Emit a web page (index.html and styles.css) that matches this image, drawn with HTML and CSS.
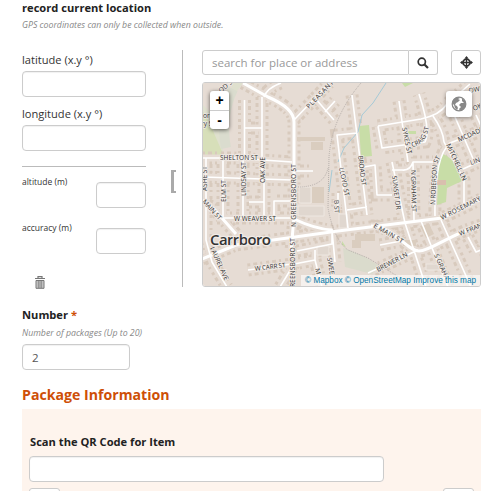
FILE: index.html
```html
<!DOCTYPE html>
<html lang="en">
<head>
<meta charset="utf-8">
<title>Package form</title>
<link rel="stylesheet" href="styles.css">
</head>
<body>
<form class="form">
  <section class="question">
    <h2 class="label">record current location</h2>
    <p class="hint">GPS coordinates can only be collected when outside.</p>
    <div class="geo">
      <div class="coords">
        <label class="coord">latitude (x.y °)<input class="field" type="text"></label>
        <label class="coord">longitude (x.y °)<input class="field" type="text"></label>
        <div class="extras">
          <label class="extra">altitude (m)<input class="field small" type="text"></label>
          <label class="extra">accuracy (m)<input class="field small" type="text"></label>
        </div>
        <svg class="trash" width="10" height="13" viewBox="0 0 10 13"><path d="M3 2V.7h4V2M0 2.5h10" fill="none" stroke="#777" stroke-width="1.2"/><path d="M1 4.5h8v7.8H1z" fill="#ccc" stroke="#777"/><path d="M3.3 5v7M5 5v7M6.7 5v7" stroke="#777" stroke-width=".8"/></svg>
      </div>
      <div class="bracket"></div>
      <div class="mapside">
        <div class="searchrow">
          <input class="search" type="text" placeholder="search for place or address">
          <button class="btn go" type="button"><svg width="12" height="12" viewBox="0 0 12 12" fill="none" stroke="#333"><circle cx="4.8" cy="4.8" r="3.6" stroke-width="1.7"/><path d="M7.5 7.5l3.5 3.5" stroke-width="2.2"/></svg></button>
          <button class="btn locate" type="button"><svg width="13" height="13" viewBox="0 0 13 13"><circle cx="6.5" cy="6.5" r="3.4" fill="none" stroke="#333" stroke-width="1.7"/><path d="M6.500 1v11M1 6.500h11" stroke="#333" stroke-width="1.3"/><path d="M6.500 0l2 2.600h-4zM6.500 13l2-2.600h-4zM0 6.500l2.600-2v4zM13 6.500l-2.600-2v4z" fill="#333"/></svg></button>
        </div>
        <div class="map">
          <svg class="tiles" viewBox="202 83 279 204">
            <defs>
              <g id="minor">
                <path d="M244.500 100V160M262 97V183M245 128h17M202 158h32L292 162M202 177L292 180M206 158V240L212 262L227 287M223 158V218M243 158V218M264 183V217M249 202h15M274 217V201h18M264 97Q267 88 281 83M294 120L315 98L334 120M325 112l10-11M315 98L329 83M217 218h77M297 251L332 244V229M280 287L294 264L315 260V250M315 260L322 287M332 230L335 262M248 270L292 264M338 193V204L336 212M294 171h19"/>
                <path d="M352 95L367 215M357 133L337 135L348 228M347 210L367 207M378 126L421 119Q440 115 447 104L470 84M378 126L382 148L425 142Q431 130 419 94M399 101L408 162M358 168L375 165L377 195H392M392 162L405 223M392 170H402Q410 171 413 162H433M413 162L414 220M433 116Q443 130 444 142L464 180V205M481 131L450 143Q434 157 435 216M452 110L474 161M463 169L481 161M476 115L481 126M405 223L426 287M421 221L448 287M441 220L471 287M468 237L476 252L481 250M380 245L401 241M368 273L418 250"/>
              </g>
              <g id="major">
                <path d="M243 83L268 97Q294 108 294 122V217L291 251M202 200L214 209L236 234M202 259L236 245L295 237L338 231L442 218L481 199M294 219Q315 229 332 230M371 226C392 225 407 251 419 251C431 251 448 235 481 225"/>
              </g>
              <path id="craig" d="M412 147Q425 145 429 128"/>
            </defs>
            <path d="M202 83h279v204H202z" fill="#e6dcd4"/>
            <path d="M202 83h41L223 110V158H202z" fill="#dfe0ce"/>
            <path d="M202 110L210 124L224 156H202z" fill="#d7dfb9"/>
            <path d="M202 83h31L224 109L216 118L202 104z" fill="#e6dcd4"/>
            <path d="M233 89Q220 116 226 148" fill="none" stroke="#dadcce" stroke-width="10"/>
            <use href="#minor" class="houses"/><use href="#major" class="houses"/>
            <use href="#minor" class="verge"/><use href="#major" class="verge"/>
            <path class="plot" d="M297 137h28v4h-28zM311 142h12v8h-12zM312 187h12v16h-12zM355 234h20v7h-20zM297 193h13v8h-13zM403 240h13v6h-13zM352 240h9v8h-9zM420 226l9-2 5 10-8 4z"/>
            <path class="lot" d="M299 187h12v16h-12zM298 206h26v10h-26zM339 214h8v14h-8zM317 246h12v9h-12zM426 264h14v6h-14z"/>
            <path class="park" d="M359 126l10-1 3 31-11 1zM402 83h11l-8 4zM443 154q14 6 19 27l-15 7-1 14-9 3 2-45zM408 131h8v3h-8zM342 245v-4l4 6z"/>
            <path d="M437 180h9v5h-9z" fill="#d9bfae"/>
            <path d="M343 248Q365 255 379 266L372 274L345 267z" fill="#dadbcc"/>
            <path class="stream" d="M386 83L373 103L362 115L358 132L344 148L338 162M332 170L329 192"/>
            <path class="rail" d="M361 83Q332 117 329 157L328 208Q334 240 348 250L368 258L402 279M298 187Q324 187 328 168"/>
            <use href="#minor" class="road minor"/><use href="#major" class="road major"/>
            <g class="names">
              <text transform="translate(309 109) rotate(-46)" textLength="36">PLEASANT</text>
              <text transform="translate(221 93) rotate(-40)">OD ST</text>
              <text x="199" y="118">oor</text><text x="201" y="126">ry S</text>
              <text x="220" y="160" textLength="38">SHELTON ST</text>
              <text transform="translate(202 202) rotate(48)" textLength="25">MAIN ST</text>
              <text transform="translate(207 191) rotate(-90)" textLength="25">ASHE ST</text>
              <text transform="translate(226 202) rotate(-90)" textLength="22">ELM ST</text>
              <text transform="translate(246 196) rotate(-90)" textLength="34">LINDSAY ST</text>
              <text transform="translate(265 183) rotate(-90)" textLength="26">OAK AVE</text>
              <text transform="translate(296 227) rotate(-90)" textLength="63">N GREENSBORO ST</text>
              <text transform="translate(295 292) rotate(-90)" textLength="54">GREENSBORO ST</text>
              <text x="234" y="221" textLength="42">W WEAVER ST</text>
              <text transform="translate(210 248) rotate(66)" textLength="36">LAUREL AVE</text>
              <text transform="translate(255 271) rotate(-7)" textLength="31">W CARR ST</text>
              <text transform="translate(327 258) rotate(80)">SWEE</text>
              <text transform="translate(315 269) rotate(75)">M</text>
              <text transform="translate(339 168) rotate(78)" textLength="29">LLOYD ST</text>
              <text transform="translate(334 200) rotate(87)">B ST</text>
              <text transform="translate(358 156) rotate(83)" textLength="30">BROAD ST</text>
              <text transform="translate(402 128) rotate(78)" textLength="27">SYKES ST</text>
              <text><textPath href="#craig">CRAIG ST</textPath></text>
              <text transform="translate(446 145) rotate(65)" textLength="40">MITCHELL LN</text>
              <text transform="translate(459 142) rotate(-24)">MCDADE</text>
              <text transform="translate(469 93) rotate(-10)">OWE</text>
              <text transform="translate(474 111) rotate(-25)">OK</text>
              <text transform="translate(471 165) rotate(-20)">LIN</text>
              <text transform="translate(411 170) rotate(89)" textLength="42">N GRAHAM ST</text>
              <text transform="translate(392 176) rotate(83)" textLength="34">SUNSET DR</text>
              <text transform="translate(435 205) rotate(-87)" textLength="40">N ROBERSON</text>
              <text transform="translate(437 164) rotate(-60)">ST</text>
              <text transform="translate(442 220) rotate(-27)" textLength="44">W ROSEMARY</text>
              <text transform="translate(460 236) rotate(-22)">W FRAN</text>
              <text transform="translate(373 227) rotate(30)" textLength="33">E MAIN ST</text>
              <text transform="translate(378 272) rotate(-28)" textLength="34">BREWER LN</text>
              <text transform="translate(434 255) rotate(66)">S GRAHA</text>
              <text class="town" x="210" y="245" textLength="61">Carrboro</text>
            </g>
          </svg>
          <div class="zoomer"><span>+</span><span>-</span></div>
          <div class="layers"><svg width="16" height="16" viewBox="0 0 16 16"><circle cx="8" cy="8" r="6.8" fill="#fff" stroke="#888" stroke-width="1.3"/><path d="M1 7Q2 2 7 1L9 2L7 3L9 4L7 6L5 7L4 9L6 10L7 12L6 14L4 12L3 9zM11 2L14 5L15 9L12 14L9 15L8 13L10 11L8 9L10 7L13 7L11 5z" fill="#888"/></svg></div>
          <div class="credit">© Mapbox © OpenStreetMap Improve this map</div>
        </div>
      </div>
    </div>
  </section>
  <section class="question number">
    <h2 class="label">Number <span class="required">*</span></h2>
    <p class="hint">Number of packages (Up to 20)</p>
    <input class="field count" type="text" value="2">
  </section>
  <h1 class="group-title">Package Information</h1>
  <section class="group">
    <h2 class="label">Scan the QR Code for Item</h2>
    <input class="field scan" type="text">
    <div class="group-actions"><span class="action"></span><span class="action"></span></div>
  </section>
</form>
</body>
</html>
```
FILE: styles.css
```css
* { box-sizing: border-box; }
html, body { margin: 0; height: 491px; overflow: hidden; background: #fff; }
body { font-family: "Open Sans", sans-serif; font-size: 11.1px; color: #333; }
.form { width: 459px; margin-left: 22px; }
.label { margin: 0; font-size: 11.15px; line-height: 16px; font-weight: 700; color: #222; }
.hint { margin: 3px 0 0; font-size: 8.75px; line-height: 12px; font-style: italic; color: #888; }
.geo { display: flex; height: 237px; margin-top: 19px; }
.field { display: block; border: 1px solid #ccc; border-radius: 4px; background: #fff; height: 26px; width: 124px; padding: 0 9px; font: 11.5px "Open Sans", sans-serif; color: #555; box-shadow: inset 0 1px 1px rgba(0,0,0,.06); }
.coords { width: 124px; }
.coord { display: block; height: 54px; padding-top: 2px; line-height: 16px; }
.coord .field { margin-top: 3px; }
.extras { margin-top: 8px; border-top: 1px solid #bbb; padding-top: 8px; }
.extra { display: flex; justify-content: space-between; height: 46px; font-size: 8.5px; line-height: 14px; }
.field.small { width: 50px; margin-top: 7px; }
.trash { display: block; margin: 9px 0 0 13px; }
.bracket { width: 37px; border-right: 1px solid #bbb; display: flex; align-items: flex-start; padding: 120px 0 0 25px; }
.bracket::before { content: ""; box-sizing: border-box; width: 5px; height: 23px; border: solid #aaa; border-width: 2px 0 2px 3px; }
.mapside { width: 279px; margin-left: 19px; }
.searchrow { display: flex; height: 25px; margin-bottom: 7px; }
.search { width: 207px; height: 25px; border: 1px solid #ccc; border-radius: 3px 0 0 3px; padding: 0 9px; font: 11.5px "Open Sans", sans-serif; }
.search::placeholder { color: #999; opacity: 1; }
.btn { display: flex; align-items: center; justify-content: center; height: 25px; padding: 0; border: 1px solid #ccc; background: #fff; border-radius: 3px; width: 30px; }
.btn.go { border-left: 0; border-radius: 0 3px 3px 0; width: 29px; }
.btn.locate { margin-left: auto; }
.map { position: relative; width: 279px; height: 205px; overflow: hidden; border: 1px solid #ccc; border-radius: 3px; }
.tiles { display: block; width: 279px; height: 204px; margin-left: -1px; }
.houses { fill: none; stroke: #d8cabd; stroke-width: 13; stroke-dasharray: 3 3 4 3 2 4; }
.verge { fill: none; stroke: #e6dcd4; stroke-width: 7; }
.road { fill: none; stroke: #fff; stroke-linejoin: round; }
.minor { stroke-width: 1.6; }
.major { stroke-width: 3; }
.plot { fill: #dacdbf; }
.lot { fill: #e0d7cf; stroke: #eee7e1; }
.park { fill: #c8dda7; }
.stream { fill: none; stroke: #a5c9d6; }
.rail { fill: none; stroke: #b5aeaa; stroke-dasharray: 1 1; }
.names { font: 6.6px "Open Sans", sans-serif; fill: #333; stroke: #f1ebe6; stroke-width: 1.5px; paint-order: stroke; }
.town { font-size: 15px; font-weight: 600; stroke-width: 2.5px; }
.zoomer { position: absolute; left: 7px; top: 8px; width: 19px; height: 38px; background: #fff; border-radius: 3px; box-shadow: 0 1px 4px rgba(0,0,0,.6); font: bold 14px/18px "Liberation Sans", sans-serif; color: #000; text-align: center; }
.zoomer span { display: block; height: 19px; }
.zoomer span + span { border-top: 1px solid #ccc; }
.layers { position: absolute; right: 8px; top: 8px; width: 26px; height: 26px; display: flex; align-items: center; justify-content: center; background: #fff; border-radius: 3px; box-shadow: 0 1px 4px rgba(0,0,0,.4); }
.credit { position: absolute; right: 0; bottom: 0; padding: 0 4px 0 4px; background: rgba(255,255,255,.6); font: 8.2px/11px "Liberation Sans", sans-serif; color: #0078a8; white-space: nowrap; }
.number { margin-top: 20px; }
.number .hint { margin-top: 4px; }
.required { color: #ce4f07; }
.count { width: 108px; margin-top: 5px; }
.group-title { margin: 15px 0 4px; font-size: 14.15px; line-height: 20px; color: #ce4f07; }
.group { height: 90px; padding: 25px 7px 0; background: #fef4ed; overflow: hidden; }
.group .label { padding-left: 1px; }
.field.scan { width: 355px; margin-top: 6px; }
.group-actions { display: flex; justify-content: space-between; margin-top: 6px; }
.action { width: 31px; height: 26px; border: 1px solid #ccc; border-radius: 3px; background: #fff; }
```
